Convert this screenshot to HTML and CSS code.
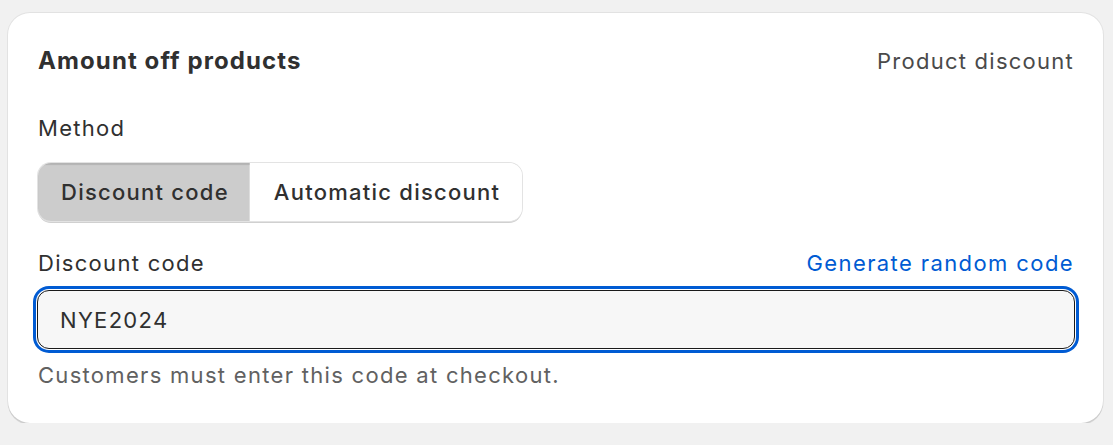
FILE: index.html
```html
<!DOCTYPE html>
<html lang="en">
<head>
<meta charset="utf-8">
<title>Amount off products</title>
<link rel="stylesheet" href="styles.css">
</head>
<body>
<div class="card">
  <div class="card-header">
    <h2 class="title">Amount off products</h2>
    <span class="subtitle">Product discount</span>
  </div>
  <div class="method">
    <div class="label">Method</div>
    <div class="segmented">
      <button class="seg seg-selected">Discount code</button>
      <button class="seg">Automatic discount</button>
    </div>
  </div>
  <div class="field">
    <div class="field-label-row">
      <label class="label" for="code">Discount code</label>
      <a class="link" href="#">Generate random code</a>
    </div>
    <div class="input-wrap">
      <input id="code" class="input" type="text" value="NYE2024">
    </div>
    <div class="help">Customers must enter this code at checkout.</div>
  </div>
</div>
</body>
</html>
```

FILE: styles.css
```css
* { box-sizing: border-box; }
html, body {
  margin: 0;
  padding: 0;
  background: #f1f1f1;
}
body {
  font-family: Inter, "Noto Sans", sans-serif;
  color: #303030;
  padding: 13px 10px 0 8px;
  letter-spacing: 1.3px;
}
.card {
  width: 1095px;
  height: 410px;
  background: #ffffff;
  border-radius: 22px;
  box-shadow: 0 0 0 1px rgba(0,0,0,0.06), 0 2px 0 0 rgba(0,0,0,0.1);
  padding: 31px 29px 30px 30px;
}
.card-header {
  display: flex;
  justify-content: space-between;
  align-items: baseline;
}
.title {
  margin: 0;
  font-size: 24px;
  line-height: 34px;
  font-weight: 650;
  letter-spacing: 1.1px;
  color: #303030;
}
.subtitle {
  font-size: 22px;
  line-height: 32px;
  letter-spacing: 1.25px;
  color: #4a4a4a;
}
.method {
  margin-top: 34px;
}
.label {
  display: block;
  font-size: 22px;
  line-height: 32px;
  color: #303030;
}
.segmented {
  display: inline-flex;
  margin-top: 19px;
  border-radius: 13px;
  box-shadow: 0 0 0 1px #e3e3e3, 0 2px 0 0 #d0d0d0;
  overflow: hidden;
}
.seg {
  font-family: Inter, "Noto Sans", sans-serif;
  font-size: 22px;
  font-weight: 450;
  letter-spacing: 1.25px;
  color: #303030;
  background: #ffffff;
  border: 0;
  height: 58px;
  padding: 0 21px 0 23px;
  margin: 0;
}
.seg + .seg {
  padding: 0 22px 0 24px;
}
.seg-selected {
  background: #cccccc;
  box-shadow: inset 0 2px 1px rgba(0,0,0,0.12), inset -1px 0 0 #e0e0e0;
}
.field {
  margin-top: 26px;
}
.field-label-row {
  display: flex;
  justify-content: space-between;
  align-items: baseline;
}
.link {
  font-size: 22px;
  line-height: 32px;
  letter-spacing: 1.4px;
  color: #005bd3;
  text-decoration: none;
}
.input-wrap {
  margin-top: 11px;
}
.input {
  display: block;
  height: 59px;
  margin: 0 0 0 -1px;
  width: calc(100% + 2px);
  font-family: Inter, "Noto Sans", sans-serif;
  font-size: 22px;
  letter-spacing: 1.3px;
  color: #303030;
  background: #f7f7f7;
  border: 1px solid #1a1a1a;
  border-radius: 12px;
  padding: 0 22px;
  outline: none;
  box-shadow: 0 0 0 1px #ffffff, 0 0 0 4px #005bd3;
}
.help {
  margin-top: 10px;
  font-size: 22px;
  line-height: 32px;
  color: #616161;
}
```
